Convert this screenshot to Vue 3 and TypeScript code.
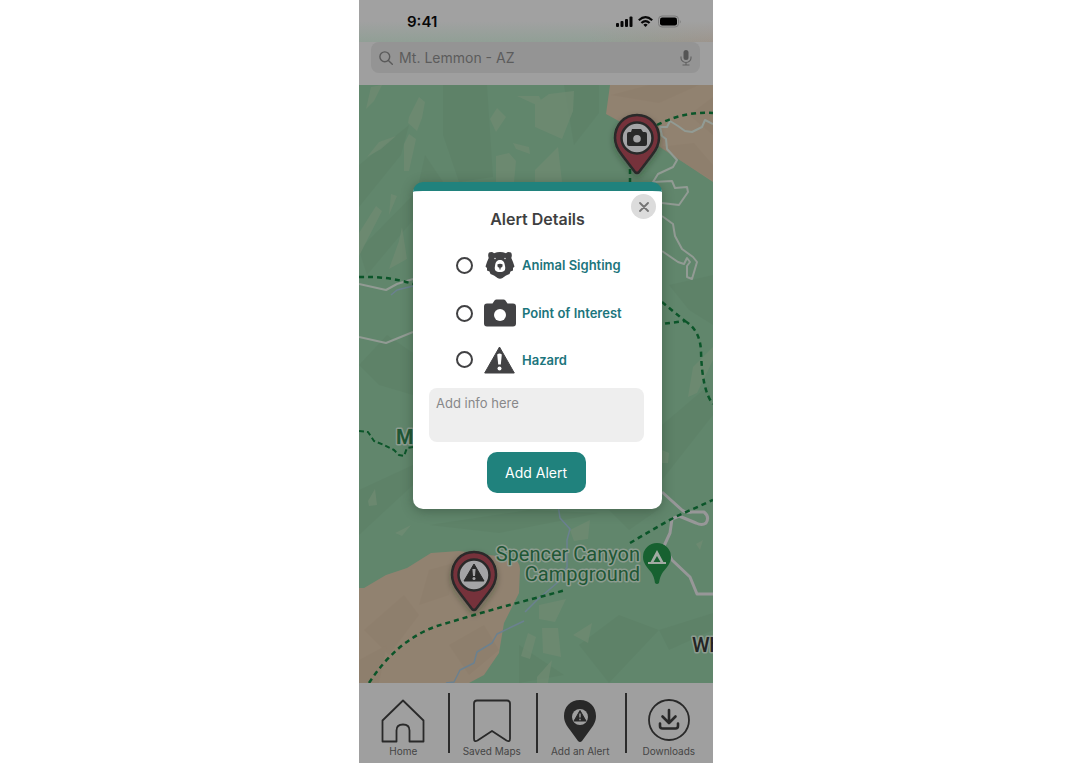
<script setup lang="ts">
import { ref } from 'vue'

type AlertKind = 'animal' | 'poi' | 'hazard'

interface AlertOption {
  kind: AlertKind
  label: string
}

const options: AlertOption[] = [
  { kind: 'animal', label: 'Animal Sighting' },
  { kind: 'poi', label: 'Point of Interest' },
  { kind: 'hazard', label: 'Hazard' },
]

const place = ref('Mt. Lemmon - AZ')
const selected = ref<AlertKind | null>(null)
const info = ref('')

const greenPatches: string[] = [
  '7,24 12,2 23,0 15,16',
  '50,32 60,12 66,17 63,33 58,46 49,38',
  '45,59 50,49 57,54 50,86 45,86',
  '131,34 138,23 147,32 137,47',
  '158,11 180,11 186,24',
  '154,58 170,62 171,69 157,64',
  '137,71 150,68 157,76 155,97 137,97',
  '8,72 20,57 37,51 22,64',
  '0,148 17,121 23,126 0,171',
  '30,130 32,109 38,111',
  '30,184 40,156 43,142 48,174',
  '176,19 190,9 215,6 214,26 203,54 176,42',
  '176,85 199,62 203,97 176,97',
  '334,282 354,262 354,275 338,308 329,312',
  '303,365 310,368 309,378 303,378',
  '36,448 52,440 43,451',
  '162,571 169,548 177,552 171,574',
  '211,445 231,435 229,454 215,456',
  '183,543 199,543 202,572 184,568',
  '214,550 233,538 229,558',
  '178,592 193,575 189,598 178,598',
  '337,459 344,455 341,465',
  '9,416 16,404 18,420 10,421',
  '180,520 207,514 196,537 180,534',
]

const darkPatches: string[] = [
  '0,80 50,40 42,70 0,122',
  '84,0 128,0 134,92 100,97 84,50',
  '66,70 84,97 60,97',
  '0,165 54,110 54,135 8,190',
  '0,280 28,250 54,268 54,310 20,300',
  '0,405 54,380 54,400 0,450',
  '310,200 354,190 354,240 330,225',
  '303,340 350,300 354,330 303,395',
  '160,560 205,590 160,598',
  '220,560 260,530 300,545 250,598',
  '70,440 170,425 240,428 140,448',
  '205,0 240,0 240,28 215,60',
  '250,425 300,424 270,445',
  '300,545 354,528 354,545 310,565',
]

const tanPatches: string[] = [
  '252,10 290,0 340,0 300,18',
  '300,62 335,58 354,80 354,96',
  '5,545 45,510 60,530 30,570',
  '70,485 95,478 90,510 60,520',
  '90,560 125,540 140,565 110,590',
  '0,575 28,560 20,598 0,598',
  '330,30 354,12 354,50',
]
</script>

<template>
  <div class="stage">
    <main class="phone">
      <header class="top">
        <div class="status">
          <time class="clock">9:41</time>
          <svg class="status-icons" width="66" height="14" viewBox="0 0 66 14" aria-hidden="true">
            <g fill="#080808">
              <rect x="0" y="9" width="3" height="4" rx="1" />
              <rect x="4.500" y="7" width="3" height="6" rx="1" />
              <rect x="9" y="5" width="3" height="8" rx="1" />
              <rect x="13.500" y="2.500" width="3" height="10.500" rx="1" />
            </g>
            <g fill="none" stroke="#080808" stroke-width="2.200">
              <path d="M22.800 6.200Q29.500 .2 36.200 6.200" />
              <path d="M25.400 9Q29.500 5.200 33.600 9" />
            </g>
            <path d="M27.300 10.700Q29.500 9 31.700 10.700L29.500 13Z" fill="#080808" />
            <rect x="42.500" y="2" width="20" height="11" rx="3.500" fill="none" stroke="#7b7b7b" />
            <rect x="44" y="3.500" width="17" height="8" rx="2.200" fill="#000" />
            <path d="M63.800 5.500q1.800 2 0 4Z" fill="#7b7b7b" />
          </svg>
        </div>
        <form class="search" role="search" @submit.prevent>
          <svg width="14" height="14" viewBox="0 0 14 14" fill="none" stroke="#5a5a5a" stroke-width="1.400" aria-hidden="true">
            <circle cx="5.800" cy="5.800" r="4.900" />
            <path d="M9.400 9.400L13.300 13.300" stroke-linecap="round" />
          </svg>
          <input v-model="place" type="text" aria-label="Search location" />
          <button type="button" class="mic" aria-label="Voice search">
            <svg width="12" height="16" viewBox="0 0 12 16" aria-hidden="true">
              <rect x="3.500" y="0" width="5" height="10" rx="2.500" fill="#555" />
              <path d="M1 6.500v1.500a5 4.500 0 0 0 10 0V6.500M6 12.500V15M2.500 15h7" fill="none" stroke="#606060" stroke-width="1.100" />
            </svg>
          </button>
        </form>
      </header>

      <section class="map" aria-label="Trail map">
        <svg class="terrain" viewBox="0 0 354 598" preserveAspectRatio="xMidYMid slice">
          <defs>
            <path id="pin" d="M0-23C-13-23-22-13-22 0C-22 7-19 12-15 17L-2 34Q0 36 2 34L15 17C19 12 22 7 22 0C22-13 13-23 0-23Z" />
            <filter id="pin-shadow" x="-40%" y="-40%" width="180%" height="180%">
              <feDropShadow dx="0" dy="3" stdDeviation="3" flood-color="#1b2a20" flood-opacity=".35" />
            </filter>
          </defs>

          <rect width="354" height="598" fill="#61866c" />
          <g fill="#5a7d64" opacity=".4">
            <polygon v-for="p in darkPatches" :key="p" :points="p" />
          </g>
          <g fill="#718b73" opacity=".7">
            <polygon v-for="p in greenPatches" :key="p" :points="p" />
          </g>

          <g fill="#918270">
            <path d="M251 0L247 29L285 50L301 62L354 97V0Z" />
            <path d="M0 503H5L27 490L48 483L72 468L100 466L153 473Q161 476 161 484L160 508L153 522L145 538L140 568L125 590L110 598H0Z" />
          </g>
          <g fill="#8b7a68" opacity=".35">
            <polygon v-for="p in tanPatches" :key="p" :points="p" />
          </g>

          <g class="river">
            <path d="M32 210L38 205L54 201" />
            <path d="M87 598L95 597L101 585L115 578L118 567L133 558L138 549L165 536M166 527L178 515L198 498L208 482V455L211 444L201 433L199 420" />
          </g>
          <g class="road">
            <path d="M0 199L27 205L38 199L54 194M0 252L27 258L54 247" />
            <path d="M354 39L346 35L343 42L333 47L326 46L319 41L311 36L308 42L301 42L303 51L307 54L308 64L318 75L314 82L299 89L294 97L313 96L316 103L328 102L329 107L320 120L303 118" />
            <path d="M303 131L314 139L316 151L323 164L334 172L338 177L333 194L328 192V181L331 177L328 173L325 179L319 177L303 166" />
          </g>
          <path class="main-road" d="M303 407L323 425Q326 428 333 427L345 427Q351 432 347 438Q343 441 337 438L320 431L313 434L311 448L305 461L313 475L331 492L338 509H354" />
          <g class="trail">
            <path d="M0 192Q30 191 54 199" />
            <path d="M298 40Q325 26 354 28M271 84V100" />
            <path d="M303 217L326 236L303 239M326 236Q341 245 342 266Q343 306 354 319" />
            <path d="M271 458L293 445L316 432L354 415" />
            <path d="M10 598Q38 555 78 541L115 530L143 522L207 505" />
          </g>
          <path class="trail thin" d="M0 346L9 347L15 356L25 360L35 365L40 370L45 371L48 363L54 362" />

          <g class="map-label">
            <text x="37" y="359" class="strong">M</text>
            <text x="281" y="476" text-anchor="end">Spencer Canyon</text>
            <text x="281" y="496" text-anchor="end">Campground</text>
            <text x="333" y="567" class="town">Wh</text>
          </g>

          <g transform="translate(298 472)">
            <path d="M0-14A14 14 0 0 0-14 0C-14 6-10 10-6 15Q-3 19-2 26Q0 28 2 26Q3 19 6 15C10 10 14 6 14 0A14 14 0 0 0 0-14Z" fill="#176130" />
            <path fill-rule="evenodd" d="M0-7L7.500 7H-7.500ZM0-1L-3.500 5H3.500Z" fill="#a2aaa3" />
            <path d="M-9 6H9" stroke="#a2aaa3" stroke-width="2" />
          </g>

          <g transform="translate(278 53)">
            <use href="#pin" fill="#76303a" stroke="#292929" stroke-width="2.500" filter="url(#pin-shadow)" />
            <circle r="15.500" fill="#a4a4a6" stroke="#292929" stroke-width="2.500" />
            <path d="M-10-4Q-10-6-8-6H-6L-5-9H4L6-6H8Q10-6 10-4V6Q10 8 8 8H-8Q-10 8-10 6Z" fill="#292929" />
            <circle cy=".8" r="3.800" fill="#a4a4a6" />
          </g>
          <g transform="translate(115 490)">
            <use href="#pin" fill="#76303a" stroke="#292929" stroke-width="2.500" filter="url(#pin-shadow)" />
            <circle r="15.500" fill="#a4a4a6" stroke="#292929" stroke-width="2.500" />
            <path d="M0-11L10 6H-10Z" fill="#292929" stroke="#292929" stroke-linejoin="round" />
            <path d="M-1.600-6H1.600L1 1H-1Z" fill="#a4a4a6" />
            <circle cy="3.500" r="1.500" fill="#a4a4a6" />
          </g>
        </svg>

        <form class="dialog" role="dialog" aria-labelledby="dialog-title" @submit.prevent>
          <button type="button" class="close" aria-label="Close">
            <svg width="10" height="10" viewBox="0 0 10 10" aria-hidden="true">
              <path d="M1 1L9 9M9 1L1 9" stroke="#747474" stroke-width="1.800" stroke-linecap="round" />
            </svg>
          </button>
          <h1 id="dialog-title">Alert Details</h1>
          <div class="options" role="radiogroup" aria-labelledby="dialog-title">
            <label v-for="option in options" :key="option.kind" class="option">
              <input v-model="selected" type="radio" name="alert-kind" :value="option.kind" />
              <svg v-if="option.kind === 'animal'" width="32" height="30" viewBox="0 0 32 30" aria-hidden="true">
                <path d="M5 2.500Q8 1 10 3.200Q16 .8 22 3.200Q24 1 27 2.500Q28.500 4.500 27.300 8L29 12L30.500 16.500L29 18L29 20.500L26.500 21.500L25.500 24L22 25.500L18.500 28Q16 29.500 13.500 28L10 25.500L6.500 24L5.500 21.500L3 20.500L3 18L1.500 16.500L3 12L4.700 8Q3.500 4.500 5 2.500Z" fill="#424244" />
                <path d="M16 10C12.500 10 11.500 12.500 11 16C10 20.500 12 22 16 22S22 20.500 21 16C20.500 12.500 19.500 10 16 10Z" fill="#fff" />
                <path d="M13.300 14.500Q16 13 18.700 14.500Q19 17 16.600 17.700V19.500H15.400V17.700Q13 17 13.300 14.500Z" fill="#424244" />
                <circle cx="11" cy="8.500" r=".8" fill="#ddd" />
                <circle cx="21" cy="8.500" r=".8" fill="#ddd" />
              </svg>
              <svg v-else-if="option.kind === 'poi'" width="32" height="28" viewBox="0 0 32 28" aria-hidden="true">
                <path d="M0 7.500Q0 4.500 3 4.500H8.500L10.500 1.500Q11.300.5 12.500.5H19.500Q20.700.5 21.500 1.500L23.500 4.500H29Q32 4.500 32 7.500V24.500Q32 27.500 29 27.500H3Q0 27.500 0 24.500Z" fill="#424244" />
                <circle cx="16" cy="16" r="6" fill="#fff" />
              </svg>
              <svg v-else width="32" height="28" viewBox="0 0 32 28" aria-hidden="true">
                <path d="M15.500 1L30.300 27H.7Z" fill="#424244" stroke="#424244" stroke-linejoin="round" />
                <path d="M13.200 8.500Q15.500 6.500 17.800 8.500L16.800 18.500H14.200Z" fill="#fff" />
                <circle cx="15.500" cy="22.500" r="2" fill="#fff" />
              </svg>
              <span>{{ option.label }}</span>
            </label>
          </div>
          <textarea v-model="info" placeholder="Add info here" aria-label="Alert info"></textarea>
          <button type="submit" class="submit">Add Alert</button>
        </form>
      </section>

      <nav class="tabs" aria-label="Main">
        <a href="#home">
          <svg width="44" height="44" viewBox="0 0 44 44" class="line" aria-hidden="true">
            <path d="M1.500 21.500L22 1.500L42.500 21.500V42.500H28.500V31.500Q28.500 25.500 22 25.500T15.500 31.500V42.500H1.500Z" />
          </svg>
          <span>Home</span>
        </a>
        <a href="#saved">
          <svg width="44" height="44" viewBox="0 0 44 44" class="line" aria-hidden="true">
            <path d="M7 1.500H37Q40 1.500 40 4.500V39.500Q40 43.500 36.500 41.500L22 32L7.500 41.500Q4 43.500 4 39.500V4.500Q4 1.500 7 1.500Z" />
          </svg>
          <span>Saved Maps</span>
        </a>
        <a href="#alert">
          <svg width="44" height="44" viewBox="0 0 44 44" aria-hidden="true">
            <path d="M22 1C12 1 6 8 6 17C6 23 9 27 12 31L20 42Q22 44 24 42L32 31C35 27 38 23 38 17C38 8 32 1 22 1Z" fill="#282828" />
            <circle cx="22" cy="18" r="8" fill="#9f9f9f" />
            <path d="M22 11.500L28 22H16Z" fill="#282828" stroke="#282828" stroke-linejoin="round" />
            <path d="M22 14.500V18.500M22 19.800V21.200" stroke="#9f9f9f" stroke-width="1.400" />
          </svg>
          <span>Add an Alert</span>
        </a>
        <a href="#downloads">
          <svg width="44" height="44" viewBox="0 0 44 44" class="line" aria-hidden="true">
            <circle cx="22" cy="21" r="20" />
            <path d="M22 11V23M15.500 17.500L22 24L28.500 17.500M13 24.500V27Q13 29.500 15.500 29.500H28.500Q31 29.500 31 27V24.500" stroke-width="2.600" stroke-linecap="round" />
          </svg>
          <span>Downloads</span>
        </a>
      </nav>
    </main>
  </div>
</template>

<style>
body {
  margin: 0;
  background: #fff;
}
</style>

<style scoped>
.stage {
  display: flex;
  justify-content: center;
  min-height: 100vh;
  font-family: Inter, "Liberation Sans", sans-serif;
}

.stage * {
  box-sizing: border-box;
}

.phone {
  display: flex;
  flex-direction: column;
  width: 100%;
  max-width: 354px;
  background: #9f9f9f;
}

.top {
  padding-bottom: 12px;
}

.status {
  display: flex;
  align-items: center;
  justify-content: space-between;
  height: 42px;
  padding: 0 31px 0 48px;
  background:
    linear-gradient(#a1a1a1 50%, rgb(161 161 161 / 0%)),
    linear-gradient(90deg, #919f96 65%, #9d958d);
}

.clock {
  color: #080808;
  font-size: 15px;
  font-weight: 600;
}

.search {
  display: flex;
  align-items: center;
  gap: 6px;
  height: 31px;
  margin: 0 13px 0 12px;
  padding: 0 8px;
  border-radius: 8px;
  background: #949494;
}

.search input {
  flex: 1;
  min-width: 0;
  padding: 0;
  border: 0;
  outline: 0;
  background: none;
  color: #5c5c5c;
  font: 14px Inter, "Liberation Sans", sans-serif;
}

button {
  display: flex;
  align-items: center;
  justify-content: center;
  padding: 0;
  border: 0;
  cursor: pointer;
  font-family: inherit;
}

.mic {
  background: none;
}

.map {
  position: relative;
  flex: 1;
  min-height: 440px;
  overflow: hidden;
}

.terrain {
  position: absolute;
  inset: 0;
  width: 100%;
  height: 100%;
}

.river,
.road,
.main-road,
.trail {
  fill: none;
  stroke-linejoin: round;
}

.river {
  stroke: #6b8190;
  stroke-width: 1.5px;
}

.road {
  stroke: #929b94;
  stroke-width: 2px;
}

.main-road {
  stroke: #979798;
  stroke-width: 3px;
}

.trail {
  stroke: #0b5529;
  stroke-width: 2.5px;
  stroke-dasharray: 5 4;
}

.thin {
  stroke-width: 2px;
  stroke-dasharray: 5 3;
}

.map-label {
  fill: #1f5735;
  stroke: #8d9c90;
  stroke-width: 3px;
  stroke-linejoin: round;
  paint-order: stroke;
  font: 400 20px Roboto, "Liberation Sans", sans-serif;
}

.strong {
  font-weight: 700;
}

.town {
  fill: #242424;
  font-weight: 500;
}

.dialog {
  position: absolute;
  top: 97px;
  right: 51px;
  left: 54px;
  display: flex;
  flex-direction: column;
  align-items: center;
  padding: 16px 16px 16px;
  border-top: 9px solid #20827d;
  border-radius: 10px;
  background: #fff;
  box-shadow: 0 2px 12px rgb(30 50 35 / 40%);
}

.close {
  position: absolute;
  top: 3px;
  right: 6px;
  width: 25px;
  height: 25px;
  border-radius: 50%;
  background: #dcdcdc;
}

h1 {
  margin: 0;
  color: #3f3f41;
  font-size: 16px;
  font-weight: 600;
  line-height: 24px;
}

.options {
  width: 100%;
  margin-top: 10px;
  padding-left: 27px;
}

.option {
  display: flex;
  align-items: center;
  height: 48px;
  color: #1c757c;
  font-size: 13px;
  font-weight: 600;
  white-space: nowrap;
}

.option:last-child {
  height: 45px;
}

.option input {
  flex: none;
  appearance: none;
  width: 17px;
  height: 17px;
  margin: 0 11px 0 0;
  border: 2px solid #414143;
  border-radius: 50%;
  background: #fff;
}

.option input:checked {
  background: #20827d;
  box-shadow: inset 0 0 0 2px #fff;
}

.option svg {
  flex: none;
  margin-right: 6px;
}

textarea {
  align-self: stretch;
  height: 54px;
  margin: 6px 2px 0 0;
  padding: 7px;
  border: 0;
  border-radius: 8px;
  outline: 0;
  resize: none;
  background: #eee;
  color: #444;
  font: 13px/16px Inter, "Liberation Sans", sans-serif;
}

textarea::placeholder {
  color: #88888a;
  opacity: 1;
}

.submit {
  min-width: 99px;
  height: 41px;
  margin: 10px 3px 0 0;
  border-radius: 10px;
  background: #20827d;
  color: #fff;
  font-size: 14px;
}

.tabs {
  display: grid;
  grid-template-columns: repeat(4, 1fr);
  padding-top: 10px;
}

.tabs a {
  display: flex;
  flex-direction: column;
  align-items: center;
  gap: 3px;
  padding: 6px 0;
  color: #454545;
  font-size: 10px;
  line-height: 11px;
  text-decoration: none;
  white-space: nowrap;
}

.tabs a + a {
  background: linear-gradient(#2b2b2b, #2b2b2b) 0 0 / 2px 60px no-repeat;
}

.line {
  fill: none;
  stroke: #292929;
  stroke-width: 1.8px;
  stroke-linejoin: round;
}
</style>
